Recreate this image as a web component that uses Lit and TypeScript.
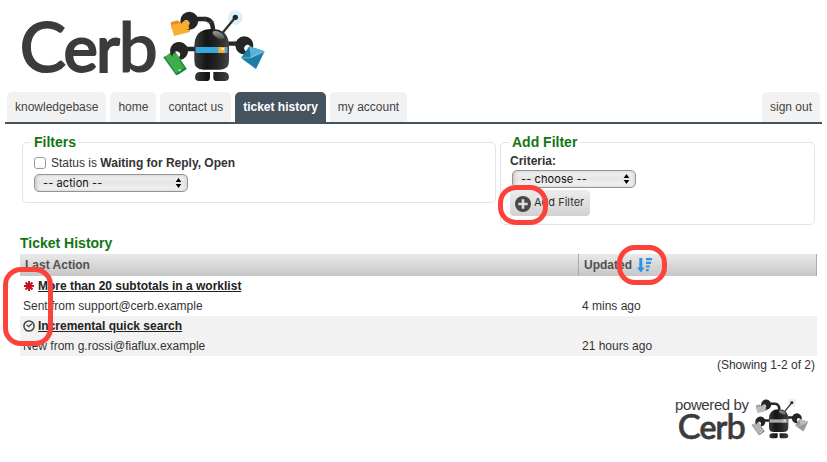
import { LitElement, html, css, svg } from "lit";
import { customElement, property } from "lit/decorators.js";

@customElement("cerb-wordmark")
class CerbWordmark extends LitElement {
  static styles = css`
    :host { display: block; line-height: 0; }
    svg { display: block; width: 100%; height: 100%; overflow: visible; }
    text { font-family: Lato, sans-serif; font-size: 70px; font-weight: 500; fill: #3b3b3d; stroke: #3b3b3d; stroke-width: 1.2px; }
    .small { font-size: 65px; stroke-width: 1.8px; }
  `;
  render() {
    return html`<svg viewBox="0 0 136 58">
      <text y="54" x="-2.5 41.5 74 96.5">C<tspan class="small">er</tspan>b</text>
    </svg>`;
  }
}

@customElement("cerb-robot")
class CerbRobot extends LitElement {
  static styles = css`
    :host { display: block; --folder: #f9ae2e; --folder-tab: #e38d20; --phone: #3fae49; --phone-edge: #148645; --mail: #1b7ea3; --flap: #5bb0dc; --visor: #35a9e0; --glow: #d9effa; }
    :host([mono]) { --folder: #bcbcbc; --folder-tab: #999; --phone: #b5b5b5; --phone-edge: #8c8c8c; --mail: #999; --flap: #bdbdbd; --visor: #aaa; --glow: #eee; }
    svg { display: block; width: 100%; height: 100%; }
    .folder { fill: var(--folder); } .tab { fill: var(--folder-tab); }
    .phone { fill: var(--phone); } .edge { fill: var(--phone-edge); }
    .mail { fill: var(--mail); } .flap { fill: var(--flap); }
    .visor { fill: var(--visor); } .glow { fill: var(--glow); }
    .eye { fill: var(--folder); }
    .arm { fill: none; stroke: #252525; stroke-width: 13; }
    .rod { stroke: #333; stroke-width: 7; }
    .dark { fill: #252525; }
  `;
  @property({ type: Boolean, reflect: true }) mono = false;
  claw(x: number, y: number, turn: number) {
    return svg`<path class="dark" transform="translate(${x} ${y}) rotate(${turn})"
      d="M-17 21A27 27 0 1 1 17 21L8 25Q12 19 10 13A10 10 0 0 0 -10 13Q-12 19 -8 25Z"/>`;
  }
  render() {
    return html`<svg viewBox="0 0 360 270">
      <defs>
        <linearGradient id="body"><stop offset="0" stop-color="#3b3b3b"/><stop offset=".35" stop-color="#151515"/><stop offset=".65" stop-color="#242424"/><stop offset="1" stop-color="#444"/></linearGradient>
        <linearGradient id="shine" x2="1" y2="1"><stop offset="0" stop-color="#aaa"/><stop offset="1" stop-color="#444"/></linearGradient>
      </defs>
      <circle class="glow" cx="241" cy="53" r="22"/>
      <path class="rod" d="M203 98L240 53"/>
      <circle class="dark" cx="241" cy="52" r="8"/>
      <path class="arm" d="M122 57H150Q173 58 174 89"/>
      <path class="arm" d="M86 147H122M218 131H251"/>
      <path d="M149 49V66M157 69L178 64M97 139V155M240 122V139" stroke="#555" stroke-width="2"/>
      <path class="tab" d="M47 67L68 61L74 66L96 61L101 77L50 87Z"/>
      <path class="folder" d="M48 76L101 62L105 96L57 108Z"/>
      ${this.claw(103, 62, 50)}
      <path class="folder" d="M80 76L94 68L101 77L103 86L84 90Z"/>
      <path class="edge" d="M25 172L31 168L69 225L63 225Z"/>
      <path class="phone" d="M29 170L57 151L95 207L67 225Z"/>
      <path class="edge" d="M57 151L95 207L67 225L64 220L88 204L54 153Z"/>
      ${this.claw(72, 153, 32)}
      <path class="phone" d="M55 165L65 161L78 180L66 184Z"/>
      <circle cx="74" cy="211" r="3" fill="#dff0dc"/>
      ${this.claw(268, 136, -48)}
      <path class="mail" d="M283 139L329 154L303 207L258 174Z"/>
      <path class="flap" d="M283 139L329 154L287 173Z"/>
      <path d="M287 173L329 154M287 173L258 174" fill="none" stroke="#d9eaf2" stroke-width="1.5"/>
      <path d="M118 139Q118 87 170 87T222 139V183Q222 209 195 209H145Q118 209 118 183Z" fill="url(#body)"/>
      <ellipse cx="190" cy="105" rx="19" ry="9" transform="rotate(27 190 105)" fill="url(#shine)"/>
      <path class="visor" d="M122 141H218V159H122Z"/>
      <path class="eye" d="M190 141H210V159H190Z"/>
      <circle cx="203" cy="147" r="4" fill="#fff4ca"/>
      <path d="M120 232Q120 216 136 216H165V233Q165 243 154 243H132Q120 243 120 232ZM175 216H205Q222 216 222 232Q222 243 209 243H186Q175 243 175 233Z" fill="url(#body)"/>
    </svg>`;
  }
}

@customElement("mac-select")
class MacSelect extends LitElement {
  static styles = css`
    :host { display: flex; align-items: center; justify-content: space-between; box-sizing: border-box; height: 18px; padding: 0 5px 0 8px; border: 1px solid #949494; border-radius: 5px; background: linear-gradient(#f1f1f1, #e6e6e6 50%, #f5f5f5); box-shadow: inset 2px 0 3px #ccc, inset -2px 0 3px #ddd; font: 11px/16px Inter, sans-serif; letter-spacing: .1px; color: #111; white-space: pre; }
    svg { width: 7px; height: 10px; }
  `;
  @property() label = "";
  render() {
    return html`<span>${this.label}</span><svg viewBox="0 0 7 10"><path d="M3.5 0L6.3 4H.7ZM3.5 10L.7 6H6.3Z"/></svg>`;
  }
}

const TABS = ["knowledgebase", "home", "contact us", "ticket history", "my account"];

@customElement("app-root")
class AppRoot extends LitElement {
  static styles = css`
    :host { display: block; position: relative; box-sizing: border-box; width: 827px; height: 462px; overflow: hidden; background: #fff; color: #333; font: 12px/20px "Liberation Sans", Arial, sans-serif; }
    .brand { display: flex; height: 92px; padding-left: 22px; box-sizing: border-box; }
    .brand cerb-wordmark { width: 136px; height: 58px; margin-top: 18px; margin-right: -3px; }
    .brand cerb-robot { width: 120px; height: 90px; }
    nav { display: flex; gap: 4px; height: 30px; margin: 0 5px; padding: 0 2px; border-bottom: 2px solid #45535f; }
    .tab { padding: 0 8px; line-height: 30px; background: #f2f2f2; color: #444; border-radius: 5px 5px 0 0; white-space: nowrap; }
    .tab.active { background: #45535f; color: #fff; font-weight: bold; }
    .tab.out { margin-left: auto; }
    .filters { display: flex; align-items: flex-start; gap: 4px; margin: 10px 0 0 22px; }
    fieldset { box-sizing: border-box; margin: 0; padding: 0; border: 1px solid #e3e3e3; border-radius: 5px; min-width: 0; }
    legend, h2 { color: #137613; font-size: 14px; font-weight: bold; line-height: 16px; }
    legend { padding: 0 3px; margin-left: 8px; }
    .current { width: 474px; height: 69px; }
    .add { width: 315px; height: 91px; }
    .check { display: flex; align-items: center; gap: 5px; height: 18px; margin: 4px 0 0 11px; line-height: 18px; }
    .box { box-sizing: border-box; width: 12px; height: 12px; border: 1px solid #999; border-radius: 3px; background: #fff; }
    .current mac-select { width: 154px; margin: 2px 0 0 11px; }
    .criteria { display: block; height: 18px; margin: 2px 0 0 9px; line-height: 18px; }
    .add mac-select { width: 124px; margin: 0 0 0 11px; }
    .button { display: flex; align-items: center; gap: 3px; box-sizing: border-box; width: 80px; height: 26px; margin: 2px 0 0 9px; padding-left: 5px; border-radius: 4px; background: linear-gradient(#ededed, #d2d2d2); font: 11px/14px Inter, sans-serif; white-space: nowrap; }
    .button svg { flex: none; width: 16px; height: 16px; margin-top: 2px; }
    .button span { margin-top: -2px; }
    .list { width: 797px; margin: 10px 0 0 20px; }
    h2 { margin: 0; height: 19px; }
    .head, .row { display: grid; grid-template-columns: 559px 238px; }
    .head { height: 22px; line-height: 22px; font-weight: bold; color: #505050; background: linear-gradient(#eaeaea, #c6c6c6); }
    .head > div { padding-left: 5px; border-right: 1px solid #aaa; display: flex; align-items: center; }
    .head svg { width: 15px; height: 16px; margin-left: 5px; }
    .row { height: 40px; }
    .row.alt { background: #f2f2f2; }
    .row > div { padding-left: 3px; }
    .row .when { padding: 20px 0 0 3px; }
    .subject { display: flex; align-items: center; gap: 3px; height: 20px; }
    .subject svg { width: 12px; height: 12px; }
    .subject a { font-weight: bold; text-decoration: underline; color: #222; }
    .count { text-align: right; padding-right: 2px; line-height: 18px; }
    .powered { display: flex; margin: 19px 0 0 675px; }
    .words svg { display: block; width: 74px; height: 19px; overflow: visible; }
    .words text { font: 15px "Liberation Sans", Arial, sans-serif; fill: #3b3b3d; }
    .words { width: 72px; }
    .words cerb-wordmark { width: 67px; height: 28.5px; margin: 0 0 0 4px; }
    .powered cerb-robot { width: 67px; height: 50.4px; }
    .ring { position: absolute; box-sizing: border-box; border: 5px solid #fb423b; }
    .r1 { left: 3px; top: 267px; width: 50px; height: 79px; border-radius: 18px; }
    .r2 { left: 498px; top: 185px; width: 50px; height: 40px; border-radius: 18px; }
    .r3 { left: 617px; top: 245px; width: 50px; height: 40px; border-radius: 18px; }
  `;
  render() {
    return html`
      <header class="brand"><cerb-wordmark></cerb-wordmark><cerb-robot></cerb-robot></header>
      <nav>
        ${TABS.map((t) => html`<div class="tab ${t === "ticket history" ? "active" : ""}">${t}</div>`)}
        <div class="tab out">sign out</div>
      </nav>
      <section class="filters">
        <fieldset class="current">
          <legend>Filters</legend>
          <div class="check"><span class="box"></span><span>Status is <b>Waiting for Reply, Open</b></span></div>
          <mac-select label="-- action --"></mac-select>
        </fieldset>
        <fieldset class="add">
          <legend>Add Filter</legend>
          <b class="criteria">Criteria:</b>
          <mac-select label="-- choose --"></mac-select>
          <div class="button">
            <svg viewBox="0 0 16 16"><circle cx="8" cy="8" r="8" fill="#484848"/><path d="M8 3.3V12.7M3.3 8H12.7" stroke="#ddd" stroke-width="2.6"/></svg>
            <span>Add Filter</span>
          </div>
        </fieldset>
      </section>
      <section class="list">
        <h2>Ticket History</h2>
        <div class="head">
          <div>Last Action</div>
          <div>Updated
            <svg viewBox="0 0 15 16" fill="#2e93e8"><path d="M2.3 1H5.3V10.5H7.7L3.8 15.5L0 10.5H2.3ZM9 1H15V3.2H9ZM9 4.7H14V6.9H9ZM9 8.4H12.8V10.6H9ZM9 12.1H11.7V14.3H9Z"/></svg>
          </div>
        </div>
        <div class="row">
          <div>
            <div class="subject"><svg viewBox="0 0 12 12"><path d="M6 1V11M1 6H11M2.5 2.5L9.5 9.5M9.5 2.5L2.5 9.5" stroke="#c80f1d" stroke-width="2"/></svg><a>More than 20 subtotals in a worklist</a></div>
            <div>Sent from support@cerb.example</div>
          </div>
          <div class="when">4 mins ago</div>
        </div>
        <div class="row alt">
          <div>
            <div class="subject"><svg viewBox="0 0 12 12" fill="none" stroke="#444"><circle cx="6" cy="6" r="5.1" stroke-width="1.5"/><path d="M3.5 5L5.7 6.7L8.8 3.7" stroke-width="1.3"/></svg><a>Incremental quick search</a></div>
            <div>New from g.rossi@fiaflux.example</div>
          </div>
          <div class="when">21 hours ago</div>
        </div>
        <div class="count">(Showing 1-2 of 2)</div>
      </section>
      <footer class="powered">
        <div class="words">
          <svg viewBox="0 0 74 19"><text x="0" y="17" textLength="74">powered by</text></svg>
          <cerb-wordmark></cerb-wordmark>
        </div>
        <cerb-robot mono></cerb-robot>
      </footer>
      <div class="ring r1"></div><div class="ring r2"></div><div class="ring r3"></div>
    `;
  }
}
